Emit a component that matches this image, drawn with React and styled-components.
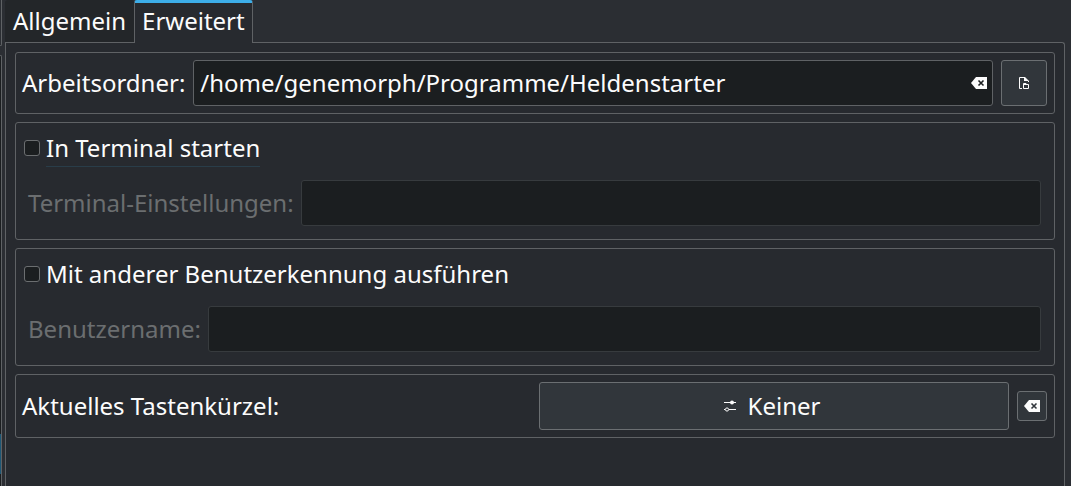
import React, { useState } from "react";
import styled, { createGlobalStyle } from "styled-components";

const GlobalStyle = createGlobalStyle`
  *, *::before, *::after { box-sizing: border-box; }
  body {
    margin: 0;
    background: #2b2e33;
    color: #fcfcfc;
    font: 24px/34px "Noto Sans", sans-serif;
  }
  input, button { font: inherit; color: inherit; }
`;

const Window = styled.div`
  display: flex;
  gap: 3px;
  min-height: 100vh;
  padding-right: 6px;
`;

const Sidebar = styled.aside`
  flex: 0 0 2px;
  display: flex;
  flex-direction: column;
  gap: 9px;
`;

const SidebarHeader = styled.div`
  height: 46px;
  border: solid #5f6265;
  border-width: 0 1px 1px 0;
  border-bottom-right-radius: 3px;
`;

const SidebarList = styled.div`
  flex: 1;
  padding-top: 378px;
  background: #1b1e20;
  border: solid #5f6265;
  border-width: 1px 1px 0 0;
  border-top-right-radius: 3px;
`;

const SelectedEntry = styled.div`
  height: 40px;
  background: #1d5775;
`;

const Main = styled.main`
  flex: 1;
  min-width: 0;
  display: flex;
  flex-direction: column;
`;

const Tabs = styled.div`
  display: flex;
  height: 43px;
  margin-bottom: -1px;
`;

const Tab = styled.button`
  position: relative;
  height: ${(p) => (p.$active ? "43px" : "42px")};
  padding: ${(p) => (p.$active ? "1px 7px 5px" : "4px 8px")};
  border: solid #5f6265;
  border-width: ${(p) => (p.$active ? "0 1px" : "0")};
  border-top: ${(p) => (p.$active ? "3px solid #3daee9" : "0")};
  border-radius: 3px 3px 0 0;
  background: ${(p) => (p.$active ? "#272a2f" : "#232629")};
`;

const Panel = styled.section`
  flex: 1;
  display: flex;
  flex-direction: column;
  gap: 8px;
  padding: 9px;
  background: #272a2f;
  border: 1px solid #5f6265;
  border-bottom: 0;
  border-top-right-radius: 3px;
`;

const Group = styled.div`
  padding: ${(p) => (p.$stacked ? "8px 13px 13px 8px" : "7px 7px 7px 6px")};
  border: 1px solid #5f6265;
  border-radius: 3px;
`;

const Row = styled.div`
  display: flex;
  align-items: center;
  gap: ${(p) => (p.$indent ? "7px" : "8px")};
  padding-left: ${(p) => (p.$indent ? "4px" : "0")};
`;

const Label = styled.label`
  white-space: nowrap;
  color: ${(p) => (p.$disabled ? "#6b6e70" : "#fcfcfc")};
`;

const Caption = styled.span`
  flex: 1;
  white-space: nowrap;
`;

const Field = styled.div`
  flex: 1;
  min-width: 0;
  height: 46px;
  display: flex;
  align-items: center;
  background: #1b1e20;
  border: 1px solid ${(p) => (p.$disabled ? "#373b3e" : "#5f6265")};
  border-radius: 3px;
`;

const TextInput = styled.input`
  flex: 1;
  min-width: 0;
  height: 100%;
  padding: 0 6px 2px;
  border: 0;
  outline: 0;
  background: transparent;
`;

const ClearButton = styled.button`
  display: flex;
  padding: 0 5px 0 4px;
  border: 0;
  background: transparent;
`;

const PushButton = styled.button`
  flex: ${(p) => (p.$wide ? "0 1 470px" : "none")};
  width: ${(p) => p.$size}px;
  height: ${(p) => p.$size}px;
  padding: ${(p) => (p.$wide ? "0 4px 0 0" : "0")};
  display: flex;
  align-items: center;
  justify-content: center;
  gap: 12px;
  background: #31363b;
  border: 1px solid #6b6f72;
  border-radius: 3px;
`;

const CheckRow = styled.div`
  display: flex;
  align-items: flex-start;
  gap: 6px;
  margin-bottom: 13px;
`;

const CheckBox = styled.input`
  appearance: none;
  width: 16px;
  height: 16px;
  margin: 9px 0 0;
  background: #1b1e20;
  border: 1px solid #6b6e70;
  border-radius: 3px;
  &:checked { background: #3daee9; }
`;

const CheckLabel = styled.label`
  height: 36px;
  border-bottom: 1px solid ${(p) => (p.$focused ? "#293d49" : "transparent")};
`;

const ClearIcon = ({ mark }) => (
  <svg width="16" height="12" viewBox="0 0 16 12" aria-hidden="true">
    <path d="M0 6 5 0H16V12H5Z" fill="#fcfcfc" />
    <path d="M7.5 3.5 12.5 8.5M12.5 3.5 7.5 8.5" stroke={mark} strokeWidth="1.6" />
  </svg>
);

const FolderIcon = () => (
  <svg width="12" height="14" viewBox="0 0 12 14" fill="none" stroke="#fcfcfc" aria-hidden="true">
    <path d="M4 12.5H1.5V1.5H7" />
    <path d="M6 1H7L11 5V6H10V5H6Z" fill="#fcfcfc" stroke="none" />
    <path d="M5.5 12.5V7.5H8L9 8.5H10.5V12.5Z" />
    <path d="M5 8.5H10" />
  </svg>
);

const ConfigureIcon = () => (
  <svg width="12" height="12" viewBox="0 0 12 12" fill="none" stroke="#fcfcfc" aria-hidden="true">
    <path d="M0 2.5H12M0 9.5H1M5 9.5H12" />
    <circle cx="8" cy="2.5" r="2" fill="#fcfcfc" stroke="none" />
    <circle cx="3" cy="9.5" r="1.6" />
  </svg>
);

export default function App() {
  const [folder, setFolder] = useState("/home/genemorph/Programme/Heldenstarter");
  const [terminal, setTerminal] = useState(false);
  const [otherUser, setOtherUser] = useState(false);

  return (
    <>
      <GlobalStyle />
      <Window>
        <Sidebar>
          <SidebarHeader />
          <SidebarList>
            <SelectedEntry />
          </SidebarList>
        </Sidebar>
        <Main>
          <Tabs role="tablist">
            <Tab role="tab" aria-selected="false">Allgemein</Tab>
            <Tab role="tab" aria-selected="true" $active>Erweitert</Tab>
          </Tabs>
          <Panel role="tabpanel">
            <Group>
              <Row>
                <Label htmlFor="folder">Arbeitsordner:</Label>
                <Field>
                  <TextInput id="folder" value={folder} spellCheck={false} onChange={(e) => setFolder(e.target.value)} />
                  <ClearButton aria-label="Arbeitsordner leeren" onClick={() => setFolder("")}>
                    <ClearIcon mark="#1b1e20" />
                  </ClearButton>
                </Field>
                <PushButton $size={46} aria-label="Ordner auswählen">
                  <FolderIcon />
                </PushButton>
              </Row>
            </Group>
            <Group $stacked>
              <CheckRow>
                <CheckBox type="checkbox" id="terminal" checked={terminal} onChange={(e) => setTerminal(e.target.checked)} />
                <CheckLabel htmlFor="terminal" $focused>In Terminal starten</CheckLabel>
              </CheckRow>
              <Row $indent>
                <Label htmlFor="options" $disabled={!terminal}>Terminal-Einstellungen:</Label>
                <Field $disabled={!terminal}>
                  <TextInput id="options" disabled={!terminal} />
                </Field>
              </Row>
            </Group>
            <Group $stacked>
              <CheckRow>
                <CheckBox type="checkbox" id="other-user" checked={otherUser} onChange={(e) => setOtherUser(e.target.checked)} />
                <CheckLabel htmlFor="other-user">Mit anderer Benutzerkennung ausführen</CheckLabel>
              </CheckRow>
              <Row $indent>
                <Label htmlFor="username" $disabled={!otherUser}>Benutzername:</Label>
                <Field $disabled={!otherUser}>
                  <TextInput id="username" disabled={!otherUser} />
                </Field>
              </Row>
            </Group>
            <Group>
              <Row>
                <Caption id="shortcut">Aktuelles Tastenkürzel:</Caption>
                <PushButton $wide $size={48} aria-describedby="shortcut">
                  <ConfigureIcon />
                  Keiner
                </PushButton>
                <PushButton $size={30} aria-label="Tastenkürzel löschen">
                  <ClearIcon mark="#31363b" />
                </PushButton>
              </Row>
            </Group>
          </Panel>
        </Main>
      </Window>
    </>
  );
}
